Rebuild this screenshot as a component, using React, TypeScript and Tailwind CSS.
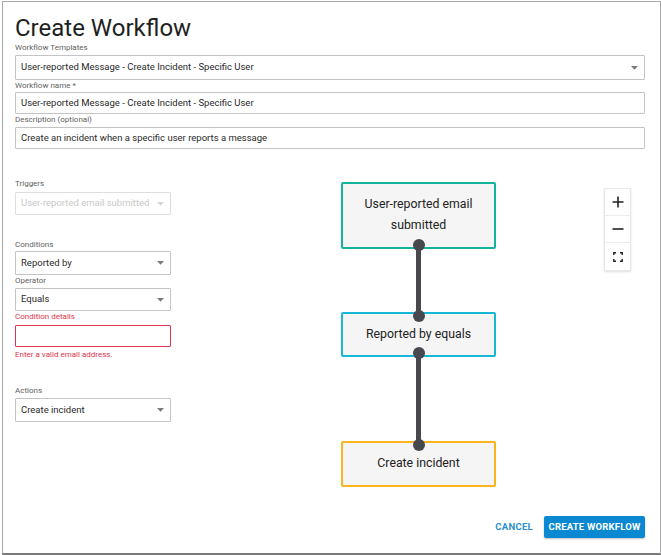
import React from "react";

const FONT = { fontFamily: "Roboto, 'Noto Sans', Arial, sans-serif" };

function FieldLabel({ text, error = false }: { text: string; error?: boolean }) {
  return (
    <div className={`h-[12px] text-[8px] leading-[12px] ${error ? "text-[#e0344c]" : "text-[#5f5f5f]"}`}>
      {text}
    </div>
  );
}

function Caret({ muted = false }: { muted?: boolean }) {
  return (
    <svg width="7" height="4" viewBox="0 0 7 4" className="shrink-0">
      <path d="M0 0 L7 0 L3.5 3.8 Z" fill={muted ? "#d4d4d4" : "#7a7a7a"} />
    </svg>
  );
}

function SelectBox({
  value,
  height,
  disabled = false,
}: {
  value: string;
  height: string;
  disabled?: boolean;
}) {
  return (
    <div
      className={`flex items-center justify-between rounded-[1px] border pl-[5px] pr-[6px] text-[9.5px] ${height} ${
        disabled ? "border-[#dedede] text-[#c9c9c9]" : "border-[#c4c4c4] text-[#2a2a2a]"
      }`}
    >
      <span className="truncate">{value}</span>
      <Caret muted={disabled} />
    </div>
  );
}

function TextBox({ value, height, error = false }: { value: string; height: string; error?: boolean }) {
  return (
    <div
      className={`flex items-center rounded-[1px] border pl-[5px] text-[9.5px] text-[#2a2a2a] ${height} ${
        error ? "border-[#e0344c]" : "border-[#c4c4c4]"
      }`}
    >
      {value}
    </div>
  );
}

interface WorkflowNodeProps {
  lines: string[];
  borderClass: string;
  heightClass: string;
  topDot?: boolean;
  bottomDot?: boolean;
}

function WorkflowNode({ lines, borderClass, heightClass, topDot, bottomDot }: WorkflowNodeProps) {
  return (
    <div
      className={`relative flex w-[155px] flex-col items-center justify-center rounded-[2px] border-2 bg-[#f5f5f5] pb-[1px] text-[12.3px] leading-[21px] text-[#222] ${borderClass} ${heightClass}`}
    >
      {lines.map((line) => (
        <span key={line}>{line}</span>
      ))}
      {topDot && (
        <div className="absolute left-[70px] top-[-4px] h-[12px] w-[12px] rounded-full bg-[#48484f]" />
      )}
      {bottomDot && (
        <div className="absolute bottom-[-4px] left-[70px] h-[12px] w-[12px] rounded-full bg-[#48484f]" />
      )}
    </div>
  );
}

function Connector({ heightClass }: { heightClass: string }) {
  return <div className={`w-[5px] bg-[#48484f] ${heightClass}`} />;
}

function ZoomControls() {
  return (
    <div className="flex w-[27px] flex-col border border-[#e8e8e8] bg-white shadow-[0_1px_2px_rgba(0,0,0,0.12)]">
      <div className="flex h-[27px] items-center justify-center border-b border-[#ececec]">
        <svg width="12" height="12" viewBox="0 0 12 12">
          <path d="M6 0.5 V11.5 M0.5 6 H11.5" stroke="#222" strokeWidth="1.6" />
        </svg>
      </div>
      <div className="flex h-[27px] items-center justify-center border-b border-[#ececec]">
        <svg width="12" height="12" viewBox="0 0 12 12">
          <path d="M0.5 6 H11.5" stroke="#222" strokeWidth="1.6" />
        </svg>
      </div>
      <div className="flex h-[27px] items-center justify-center">
        <svg width="10" height="10" viewBox="0 0 10 10" fill="none">
          <path
            d="M0.8 3 V0.8 H3 M7 0.8 H9.2 V3 M9.2 7 V9.2 H7 M3 9.2 H0.8 V7"
            stroke="#222"
            strokeWidth="1.4"
          />
        </svg>
      </div>
    </div>
  );
}

export default function App() {
  return (
    <div className="h-[555px] w-[661px] bg-white pl-[2px] pt-[1px]" style={FONT}>
      <div className="flex h-[554px] w-[659px] flex-col border border-b-2 border-[#a9a9a9] border-b-[#7a7a7a] pl-[12px] pr-[15px] pt-[12px]">
        <h1 className="h-[28px] text-[24px] leading-[28px] text-[#1f1f1f]">Create Workflow</h1>

        <div>
          <FieldLabel text="Workflow Templates" />
          <div className="mt-[1px]">
            <SelectBox value="User-reported Message - Create Incident - Specific User" height="h-[25px]" />
          </div>
          <FieldLabel text="Workflow name *" />
          <TextBox value="User-reported Message - Create Incident - Specific User" height="h-[22px]" />
          <FieldLabel text="Description (optional)" />
          <div className="mt-[1px]">
            <TextBox value="Create an incident when a specific user reports a message" height="h-[22px]" />
          </div>
        </div>

        <div className="flex flex-1">
          {/* Left: trigger / condition / action fields */}
          <div className="flex w-[156px] flex-col pt-[29px]">
            <FieldLabel text="Triggers" />
            <div className="mt-[2px]">
              <SelectBox value="User-reported email submitted" height="h-[23px]" disabled />
            </div>

            <div className="mt-[24px]">
              <FieldLabel text="Conditions" />
            </div>
            <SelectBox value="Reported by" height="h-[24px]" />
            <FieldLabel text="Operator" />
            <div className="mt-[1px]">
              <SelectBox value="Equals" height="h-[23px]" />
            </div>
            <FieldLabel text="Condition details" error />
            <div className="mt-[2px]">
              <TextBox value="" height="h-[22px]" error />
            </div>
            <div className="mt-[2px]">
              <FieldLabel text="Enter a valid email address." error />
            </div>

            <div className="mt-[24px]">
              <FieldLabel text="Actions" />
            </div>
            <div className="mt-[1px]">
              <SelectBox value="Create incident" height="h-[24px]" />
            </div>
          </div>

          {/* Right: workflow diagram */}
          <div className="flex flex-1 flex-col">
            <div className="flex">
              <div className="ml-[170px] mt-[33px] flex flex-col items-center">
                <WorkflowNode
                  lines={["User-reported email", "submitted"]}
                  borderClass="border-[#14b39b]"
                  heightClass="h-[67px]"
                  bottomDot
                />
                <Connector heightClass="h-[63px]" />
                <WorkflowNode
                  lines={["Reported by equals"]}
                  borderClass="border-[#17b7d6]"
                  heightClass="h-[45px]"
                  topDot
                  bottomDot
                />
                <Connector heightClass="h-[84px]" />
                <WorkflowNode
                  lines={["Create incident"]}
                  borderClass="border-[#fbb520]"
                  heightClass="h-[46px]"
                  topDot
                />
              </div>
              <div className="ml-[108px] mt-[39px]">
                <ZoomControls />
              </div>
            </div>

            <div className="mt-[29px] flex items-center justify-end gap-[10px]">
              <button className="px-[1px] text-[9.5px] font-bold tracking-[0.3px] text-[#2b8fd0]">CANCEL</button>
              <button className="h-[22px] w-[101px] rounded-[2px] bg-[#0a88d2] text-[9.5px] font-bold tracking-[0.2px] text-white shadow-[0_1px_2px_rgba(0,0,0,0.25)]">
                CREATE WORKFLOW
              </button>
            </div>
          </div>
        </div>
      </div>
    </div>
  );
}
